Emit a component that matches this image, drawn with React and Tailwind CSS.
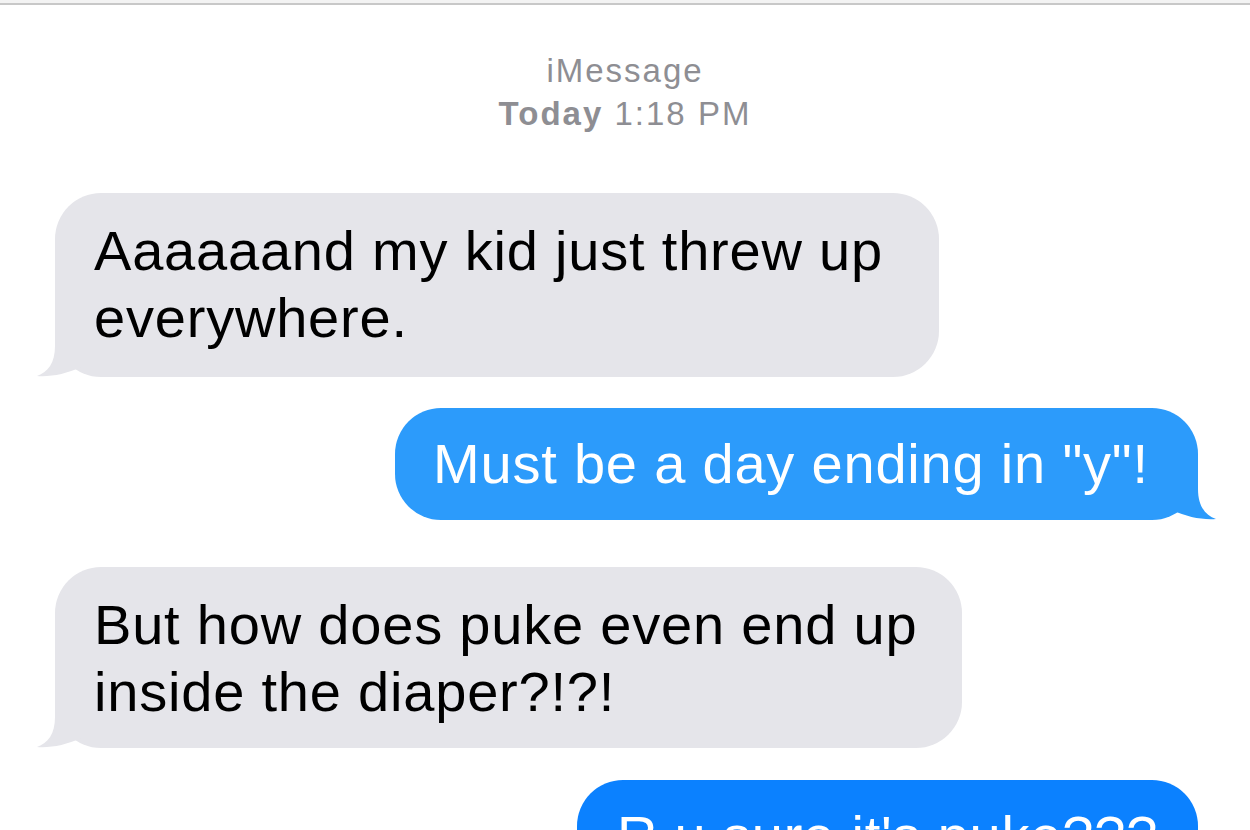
import React from 'react';

const messages = [
    { id: 1, from: 'them', lines: ['Aaaaaand my kid just threw up', 'everywhere.'] },
    { id: 2, from: 'me', lines: ['Must be a day ending in "y"!'] },
    { id: 3, from: 'them', lines: ['But how does puke even end up', 'inside the diaper?!?!'] },
    { id: 4, from: 'me', lines: ["R u sure it's puke???"] },
];

function Tail({ color, side }) {
    // little hook at the bottom corner of a bubble
    const pos = side === 'left' ? 'left-[-18px]' : 'right-[-18px] -scale-x-100';
    return (
        <svg className={`absolute bottom-[-1px] w-[50px] h-[56px] ${pos}`} viewBox="0 0 50 56">
            <path d="M18 0 L18 24 C18 41 11 50 0 54 C14 55 29 52 44 45 L44 0 Z" fill={color} />
        </svg>
    );
}

export default function App() {
    return (
        <div className="h-[830px] overflow-hidden bg-white font-['Liberation_Sans',Arial,sans-serif]">
            <div className="h-[3px] bg-[#f3f3f3]" />
            <div className="h-[2px] bg-[#c8c8c8]" />

            <div className="mt-[44px] flex flex-col items-center text-[33px] leading-[43px] tracking-[2px] text-[#8e8e93]">
                <div>iMessage</div>
                <div><span className="font-bold">Today</span> 1:18 PM</div>
            </div>

            <div className="mt-[58px] flex flex-col text-[56px] leading-[67px] tracking-[0.8px]">
                {/* 1 */}
                <div className="relative ml-[55px] w-[884px] rounded-[46px] bg-[#e5e5ea] pl-[39px] pt-[24px] pb-[26px] text-black">
                    {messages[0].lines.map(l => <div key={l} className="whitespace-nowrap">{l}</div>)}
                    <Tail color="#e5e5ea" side="left" />
                </div>

                {/* 2 */}
                <div className="relative mt-[31px] ml-[395px] w-[803px] rounded-[46px] bg-[#2c9bfb] pl-[38px] pt-[22px] pb-[23px] text-white">
                    {messages[1].lines.map(l => <div key={l} className="whitespace-nowrap">{l}</div>)}
                    <Tail color="#2c9bfb" side="right" />
                </div>

                {/* 3 */}
                <div className="relative mt-[47px] ml-[55px] w-[907px] rounded-[46px] bg-[#e5e5ea] pl-[39px] pt-[24px] pb-[23px] text-black">
                    {messages[2].lines.map(l => <div key={l} className="whitespace-nowrap">{l}</div>)}
                    <Tail color="#e5e5ea" side="left" />
                </div>

                {/* 4 */}
                <div className="relative mt-[32px] ml-[577px] w-[621px] rounded-[46px] bg-[#0b81ff] pl-[40px] pt-[22px] pb-[23px] text-white">
                    {messages[3].lines.map(l => <div key={l} className="whitespace-nowrap">{l}</div>)}
                </div>
            </div>
        </div>
    );
}
